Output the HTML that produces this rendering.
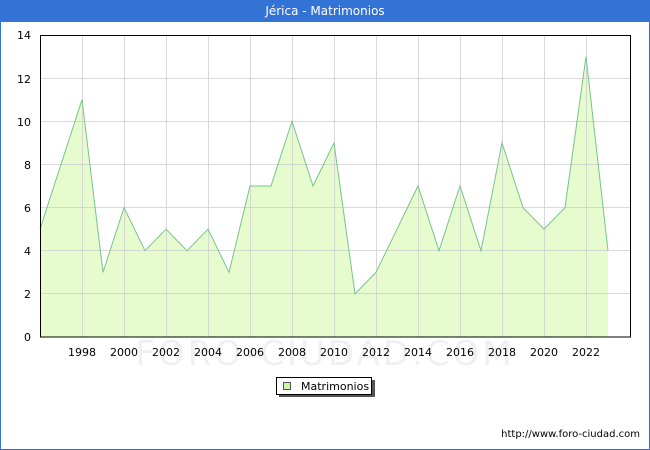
<!DOCTYPE html>
<html><head><meta charset="utf-8"><style>
html,body{margin:0;padding:0;width:650px;height:450px;overflow:hidden;background:#fff;font-family:"DejaVu Sans","Liberation Sans",sans-serif;}
.frame{position:absolute;left:0;top:0;width:648px;height:448px;border:1px solid #3473d6;}
.title{position:absolute;left:0;top:0;width:650px;height:22px;background:#3473d6;color:#fff;font-size:12px;text-align:center;line-height:23px;}
</style></head><body>
<div class="frame"></div>
<div class="title">Jérica - Matrimonios</div>
<svg width="650" height="450" style="position:absolute;left:0;top:0" font-family="DejaVu Sans, Liberation Sans, sans-serif" font-size="11">
<text x="325" y="365" font-size="34" fill="#f0f0f0" text-anchor="middle" letter-spacing="3">FORO-CIUDAD.COM</text>
<polygon fill="#e6fccf" stroke="none" points="40,337 40,229.2 61,164.4 82,99.7 103,272.3 124,207.6 145,250.7 166,229.2 187,250.7 208,229.2 229,272.3 250,186 271,186 292,121.3 313,186 334,142.9 355,293.9 376,272.3 397,229.2 418,186 439,250.7 460,186 481,250.7 502,142.9 523,207.6 544,229.2 565,207.6 586,56.6 608,250.7 608,337"/>
<g stroke="#d0d0d0" stroke-width="1" stroke-opacity="0.8">
<line x1="40" y1="293.5" x2="630" y2="293.5"/><line x1="40" y1="250.5" x2="630" y2="250.5"/>
<line x1="40" y1="207.5" x2="630" y2="207.5"/><line x1="40" y1="164.5" x2="630" y2="164.5"/>
<line x1="40" y1="121.5" x2="630" y2="121.5"/><line x1="40" y1="78.5" x2="630" y2="78.5"/>
<line x1="82.5" y1="35" x2="82.5" y2="337"/><line x1="124.5" y1="35" x2="124.5" y2="337"/>
<line x1="166.5" y1="35" x2="166.5" y2="337"/><line x1="208.5" y1="35" x2="208.5" y2="337"/>
<line x1="250.5" y1="35" x2="250.5" y2="337"/><line x1="292.5" y1="35" x2="292.5" y2="337"/>
<line x1="334.5" y1="35" x2="334.5" y2="337"/><line x1="376.5" y1="35" x2="376.5" y2="337"/>
<line x1="418.5" y1="35" x2="418.5" y2="337"/><line x1="460.5" y1="35" x2="460.5" y2="337"/>
<line x1="502.5" y1="35" x2="502.5" y2="337"/><line x1="544.5" y1="35" x2="544.5" y2="337"/>
<line x1="586.5" y1="35" x2="586.5" y2="337"/>
</g>
<polyline fill="none" stroke="#77c48a" stroke-width="1" points="40,229.2 61,164.4 82,99.7 103,272.3 124,207.6 145,250.7 166,229.2 187,250.7 208,229.2 229,272.3 250,186 271,186 292,121.3 313,186 334,142.9 355,293.9 376,272.3 397,229.2 418,186 439,250.7 460,186 481,250.7 502,142.9 523,207.6 544,229.2 565,207.6 586,56.6 608,250.7"/>
<rect x="40.5" y="35.5" width="590" height="301.5" fill="none" stroke="#000" stroke-width="1"/>
<g text-anchor="end" fill="#000">
<text x="31" y="341">0</text><text x="31" y="298">2</text><text x="31" y="255">4</text>
<text x="31" y="212">6</text><text x="31" y="169">8</text><text x="31" y="126">10</text>
<text x="31" y="83">12</text><text x="31" y="39">14</text>
</g>
<g text-anchor="middle" fill="#000">
<text x="82" y="356">1998</text><text x="124" y="356">2000</text><text x="166" y="356">2002</text>
<text x="208" y="356">2004</text><text x="250" y="356">2006</text><text x="292" y="356">2008</text>
<text x="334" y="356">2010</text><text x="376" y="356">2012</text><text x="418" y="356">2014</text>
<text x="460" y="356">2016</text><text x="502" y="356">2018</text><text x="544" y="356">2020</text>
<text x="586" y="356">2022</text>
</g>
<rect x="279" y="380" width="96" height="17" fill="#555"/>
<rect x="276.5" y="377.5" width="95" height="17" fill="#fff" stroke="#000"/>
<rect x="283.5" y="382.5" width="7" height="7" fill="#ccf5a8" stroke="#555"/>
<text x="301" y="390">Matrimonios</text>
<text x="640" y="437" text-anchor="end" font-size="10">http://www.foro-ciudad.com</text>
</svg>
</body></html>
